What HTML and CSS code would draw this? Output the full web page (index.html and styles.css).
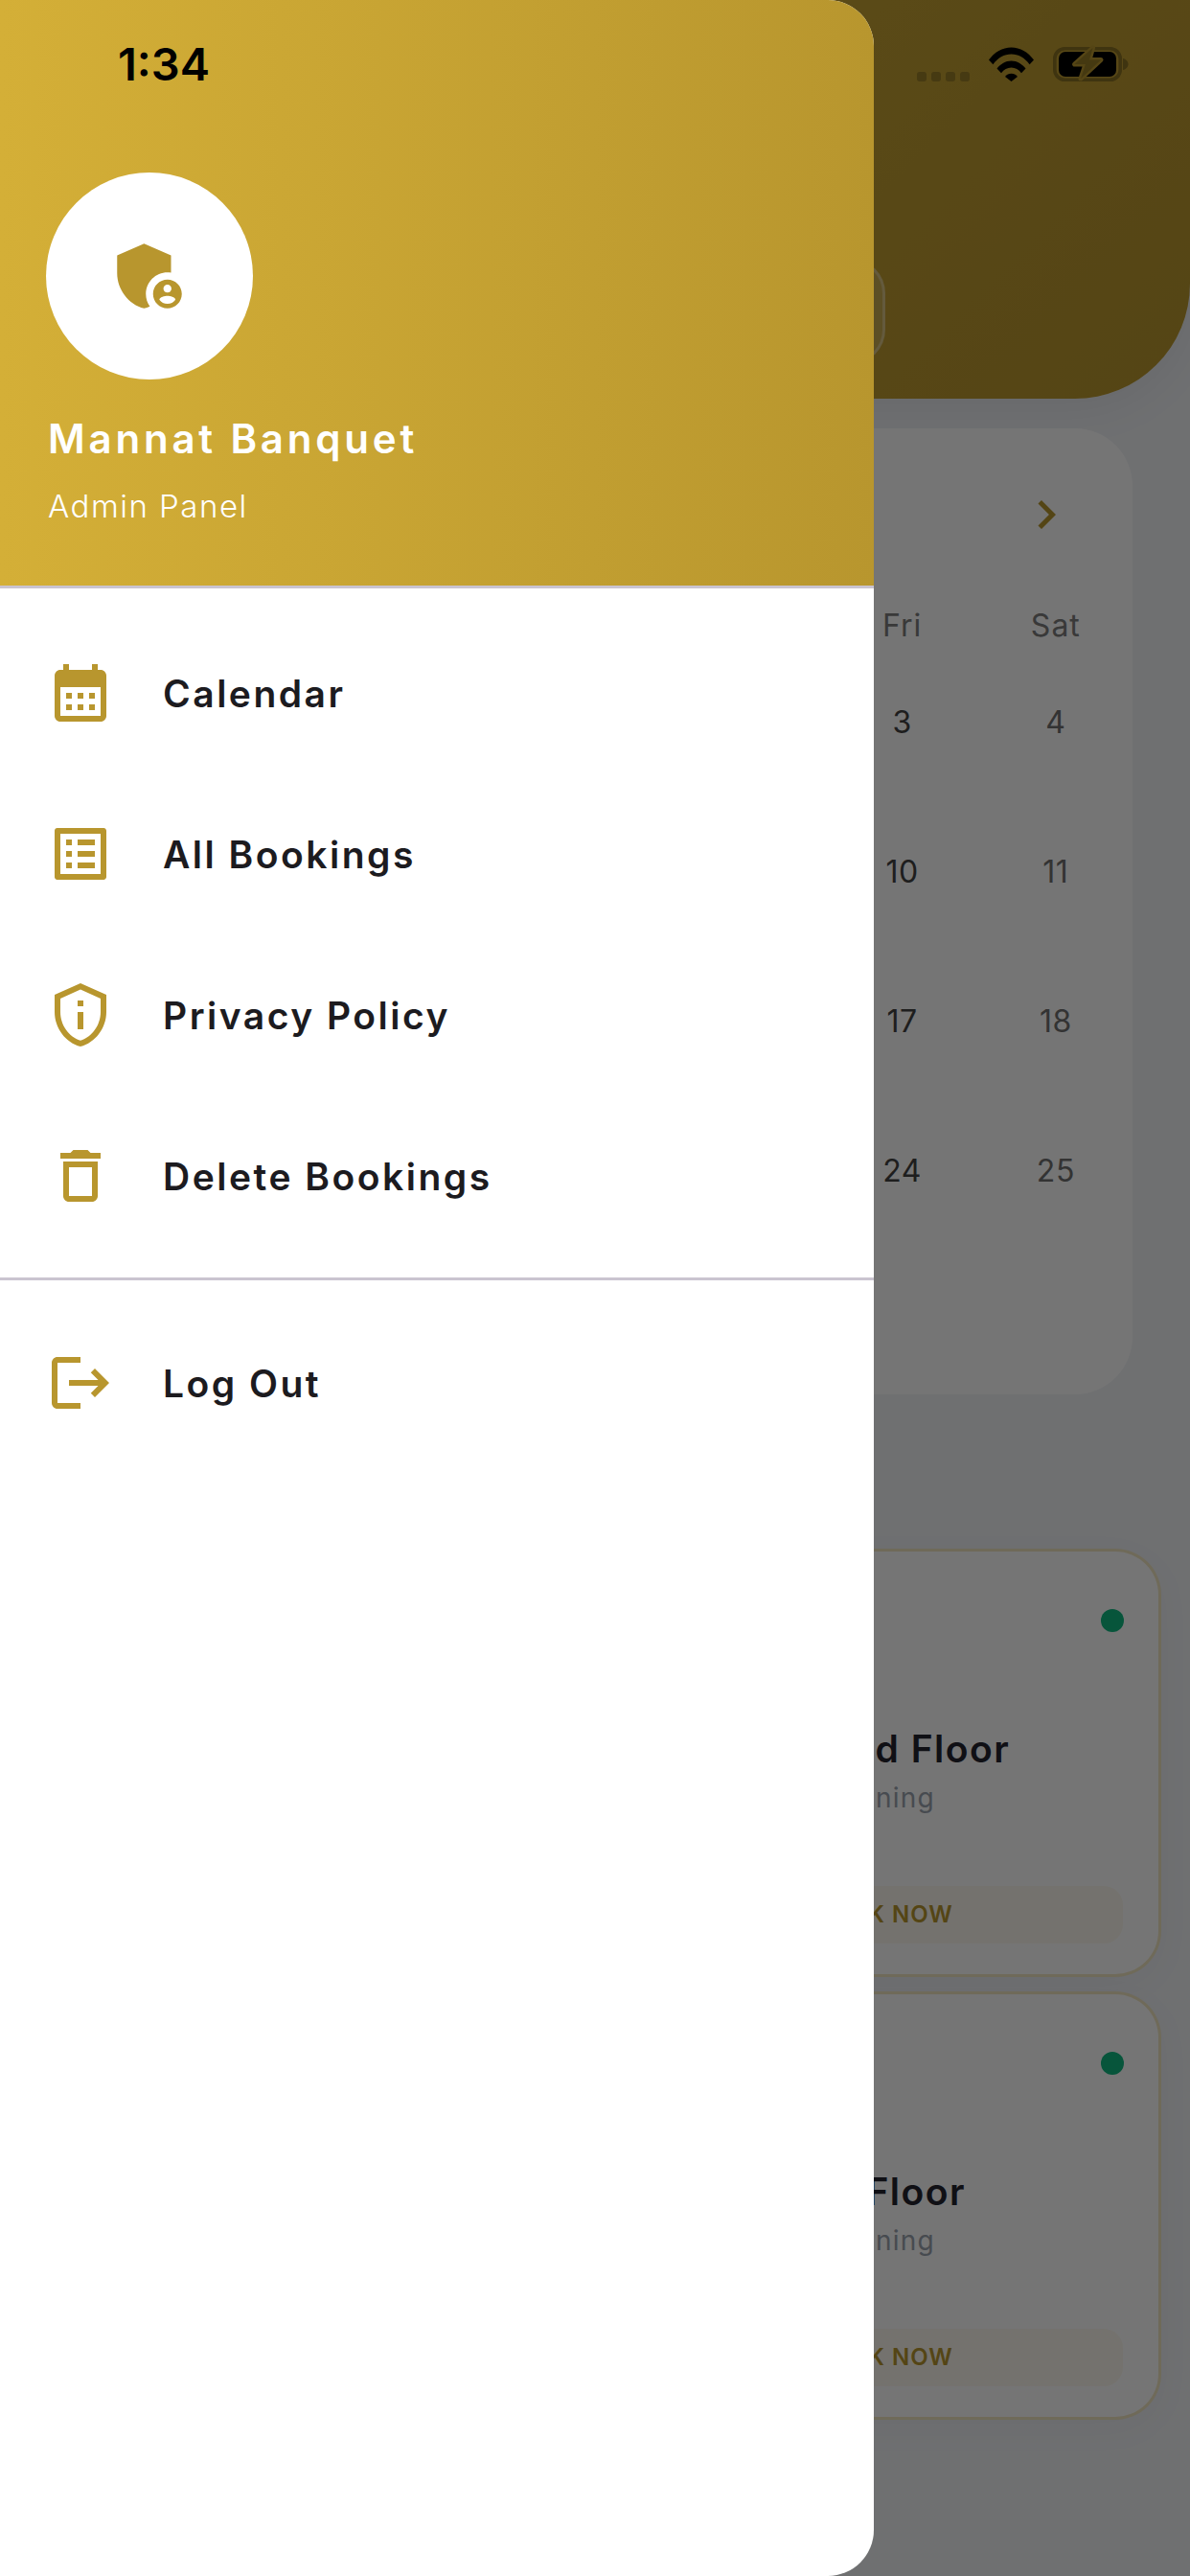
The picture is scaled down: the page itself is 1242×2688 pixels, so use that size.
FILE: index.html
```html
<!DOCTYPE html>
<html lang="en">
<head>
<meta charset="utf-8">
<title>Mannat Banquet</title>
<link rel="stylesheet" href="styles.css">
</head>
<body>
<div class="screen">
  <main class="app">
    <header class="app-header">
      <div class="header-action"></div>
    </header>
    <section class="calendar">
      <div class="calendar-nav">
        <svg class="chevron" viewBox="0 0 24 24"><path d="M10 6 8.59 7.41 13.17 12l-4.58 4.58L10 18l6-6z"/></svg>
      </div>
      <div class="calendar-grid">
        <span class="weekday fri">Fri</span><span class="weekday">Sat</span>
        <span class="date fri">3</span><span class="date sat">4</span>
        <span class="date fri">10</span><span class="date sat">11</span>
        <span class="date fri">17</span><span class="date sat">18</span>
        <span class="date fri">24</span><span class="date sat">25</span>
      </div>
    </section>
    <section class="halls">
      <article class="hall">
        <span class="hall-dot"></span>
        <h3 class="hall-title">Ground Floor</h3>
        <p class="hall-slot">Evening</p>
        <div class="hall-button">BOOK NOW</div>
      </article>
      <article class="hall">
        <span class="hall-dot"></span>
        <h3 class="hall-title">1st Floor</h3>
        <p class="hall-slot">Evening</p>
        <div class="hall-button">BOOK NOW</div>
      </article>
    </section>
  </main>

  <div class="scrim"></div>

  <aside class="drawer">
    <div class="drawer-header">
      <div class="avatar">
        <svg class="avatar-icon" viewBox="0 0 24 24">
          <path d="M17 11c.34 0 .67.04 1 .09V6.27L10.5 3 3 6.27v4.91c0 4.54 3.2 8.79 7.5 9.82.55-.13 1.08-.32 1.6-.55-.69-.98-1.1-2.17-1.1-3.45 0-3.31 2.69-6 6-6z"/>
          <path d="M17 13c-2.21 0-4 1.79-4 4s1.79 4 4 4 4-1.79 4-4-1.79-4-4-4zm0 1.38c.62 0 1.12.51 1.12 1.12s-.51 1.12-1.12 1.12-1.12-.51-1.12-1.12.5-1.12 1.12-1.12zm0 5.37c-.93 0-1.74-.46-2.24-1.17.05-.72 1.51-1.08 2.24-1.08s2.19.36 2.24 1.08c-.5.71-1.31 1.17-2.24 1.17z"/>
        </svg>
      </div>
      <div class="drawer-name">Mannat Banquet</div>
      <div class="drawer-role">Admin Panel</div>
    </div>
    <nav class="menu">
      <a class="menu-item">
        <svg class="menu-icon" viewBox="0 0 24 24"><path d="M19 4h-1V2h-2v2H8V2H6v2H5c-1.1 0-1.99.9-1.99 2L3 20c0 1.1.9 2 2 2h14c1.1 0 2-.9 2-2V6c0-1.1-.9-2-2-2zm0 16H5V10h14v10zM9 14H7v-2h2v2zm4 0h-2v-2h2v2zm4 0h-2v-2h2v2zm-8 4H7v-2h2v2zm4 0h-2v-2h2v2zm4 0h-2v-2h2v2z"/></svg>
        <span>Calendar</span>
      </a>
      <a class="menu-item">
        <svg class="menu-icon" viewBox="0 0 24 24"><path d="M19 5v14H5V5h14m1.1-2H3.9c-.5 0-.9.4-.9.9v16.2c0 .4.4.9.9.9h16.2c.4 0 .9-.5.9-.9V3.9c0-.5-.5-.9-.9-.9zM11 7h6v2h-6V7zm0 4h6v2h-6v-2zm0 4h6v2h-6zM7 7h2v2H7zm0 4h2v2H7zm0 4h2v2H7z"/></svg>
        <span>All Bookings</span>
      </a>
      <a class="menu-item">
        <svg class="menu-icon" viewBox="0 0 24 24"><path d="M12 3.19l7 3.11V11c0 4.52-2.98 8.69-7 9.93-4.02-1.24-7-5.41-7-9.93V6.3l7-3.11M12 1L3 5v6c0 5.55 3.84 10.74 9 12 5.16-1.26 9-6.45 9-12V5l-9-4zm-1 6h2v2h-2zm0 4h2v6h-2z"/></svg>
        <span>Privacy Policy</span>
      </a>
      <a class="menu-item">
        <svg class="menu-icon" viewBox="0 0 24 24"><path d="M6 19c0 1.1.9 2 2 2h8c1.1 0 2-.9 2-2V7H6v12zM8 9h8v10H8V9zm7.5-5l-1-1h-5l-1 1H5v2h14V4z"/></svg>
        <span>Delete Bookings</span>
      </a>
    </nav>
    <div class="menu-divider"></div>
    <nav class="menu">
      <a class="menu-item">
        <svg class="menu-icon" viewBox="0 0 24 24"><path d="M17 7l-1.41 1.41L18.17 11H8v2h10.17l-2.58 2.58L17 17l5-5zM4 5h8V3H4c-1.1 0-2 .9-2 2v14c0 1.1.9 2 2 2h8v-2H4V5z"/></svg>
        <span>Log Out</span>
      </a>
    </nav>
  </aside>

  <div class="status-bar">
    <span class="status-time">1:34</span>
    <div class="status-icons">
      <div class="signal"><i></i><i></i><i></i><i></i></div>
      <svg class="wifi" viewBox="0 0 47 36">
        <path class="wifi-fill" d="M0 13.5C6 5.5 14.2 0.5 23.5 0.5S41 5.5 47 13.5l-4.4 4.8C37.6 11.6 31 7.6 23.5 7.6S9.4 11.6 4.4 18.300z"/>
        <path class="wifi-fill" d="M8.500 22.500C12.300 17.600 17.500 14.400 23.500 14.400S34.700 17.600 38.500 22.500l-4.500 4.700C31.300 23.900 27.700 21.600 23.500 21.600S15.700 23.900 13 27.200z"/>
        <path class="wifi-fill" d="M17 31C18.700 29 21 27.800 23.500 27.800S28.300 29 30 31L23.500 36z"/>
      </svg>
      <svg class="battery" viewBox="0 0 79 36">
        <rect class="battery-shell" x="1.800" y="1.800" width="68.400" height="32.400" rx="10.500"/>
        <rect class="battery-charge" x="6" y="5" width="60" height="26" rx="7"/>
        <path class="battery-bolt" d="M41.500 1 22.500 18H34L29 33 50 13.500H38z"/>
        <path class="battery-cap" d="M73 12c3 .8 5.500 3 5.500 6s-2.500 5.200-5.500 6z"/>
      </svg>
    </div>
  </div>
</div>
</body>
</html>
```
FILE: styles.css
```css
* {
  box-sizing: border-box;
}

html,
body {
  margin: 0;
  padding: 0;
}

body {
  font-family: Inter, "Liberation Sans", sans-serif;
}

.screen {
  position: relative;
  width: 1242px;
  height: 2688px;
  overflow: hidden;
  background: #f1f3f7;
}

/* Page behind the drawer */
.app {
  display: flex;
  flex-direction: column;
}

.app-header {
  display: flex;
  justify-content: flex-end;
  height: 416px;
  padding: 270px 318px 0 0;
  border-radius: 0 0 120px 120px;
  background: linear-gradient(135deg, #d4af37, #b8962e);
  box-shadow: 0 12px 48px rgba(0, 0, 0, 0.06);
}

.header-action {
  width: 400px;
  height: 110px;
  border: 3px solid rgba(255, 255, 255, 0.3);
  border-radius: 36px;
  background: rgba(255, 255, 255, 0.16);
}

.calendar {
  display: flex;
  flex-direction: column;
  width: 1122px;
  height: 1008px;
  margin: 31px 0 0 60px;
  padding-top: 60px;
  border-radius: 60px;
  background: #ffffff;
}

.calendar-nav {
  display: flex;
  justify-content: flex-end;
  height: 60px;
  padding-right: 60px;
}

.chevron {
  width: 60px;
  height: 60px;
  fill: #b8962e;
}

.calendar-grid {
  display: grid;
  grid-template-columns: repeat(7, 1fr);
  grid-template-rows: 47px;
  grid-auto-rows: 156px;
  align-items: center;
  margin-top: 62px;
  font-size: 32px;
  line-height: 40px;
  text-align: center;
}

.weekday {
  letter-spacing: 1px;
  color: #7c7c7c;
}

.date {
  letter-spacing: 0.5px;
}

.fri {
  grid-column: 6;
}

.date.fri {
  color: #434343;
}

.date.sat {
  color: #707070;
}

.halls {
  display: grid;
  grid-template-columns: 579px;
  gap: 15px;
  justify-content: end;
  margin: 161px 30px 0 0;
}

.hall {
  position: relative;
  display: flex;
  flex-direction: column;
  align-items: center;
  height: 447px;
  padding: 184px 37px 0;
  border: 3px solid rgba(212, 175, 55, 0.3);
  border-radius: 48px;
  background: #ffffff;
  box-shadow: 0 10px 40px rgba(0, 0, 0, 0.03);
}

.hall-dot {
  position: absolute;
  top: 60px;
  right: 36px;
  width: 24px;
  height: 24px;
  border-radius: 50%;
  background: #10b981;
}

.hall-title {
  margin: 0;
  font-size: 39px;
  line-height: 44px;
  font-weight: 600;
  letter-spacing: 1.5px;
  color: #23232f;
}

.hall-slot {
  margin: 9px 0 0;
  padding-right: 7px;
  font-size: 28px;
  line-height: 40px;
  letter-spacing: 1.2px;
  color: #9ca3af;
}

.hall-button {
  width: 100%;
  height: 60px;
  margin-top: 72px;
  border-radius: 20px;
  background: rgba(212, 175, 55, 0.08);
  font-size: 24px;
  line-height: 60px;
  font-weight: 600;
  letter-spacing: 1px;
  text-align: center;
  color: #b8962e;
}

/* Scrim */
.scrim {
  position: absolute;
  inset: 0;
  background: rgba(0, 0, 0, 0.54);
}

/* Drawer */
.drawer {
  position: absolute;
  top: 0;
  left: 0;
  bottom: 0;
  width: 912px;
  border-radius: 0 48px 48px 0;
  overflow: hidden;
  background: #ffffff;
}

.drawer-header {
  height: 614px;
  padding: 180px 48px 0;
  border-bottom: 3px solid #cac4d0;
  background: linear-gradient(90deg, #d4af37, #b8962e);
  color: #ffffff;
}

.avatar {
  display: flex;
  align-items: center;
  justify-content: center;
  width: 216px;
  height: 216px;
  border-radius: 50%;
  background: #ffffff;
}

.avatar-icon {
  width: 90px;
  height: 90px;
  fill: #b8962e;
}

.drawer-name {
  margin: 37px 0 0 2px;
  font-size: 42px;
  line-height: 50px;
  font-weight: 600;
  letter-spacing: 3.8px;
}

.drawer-role {
  margin: 23px 0 0 2px;
  font-size: 33px;
  line-height: 44px;
  font-weight: 300;
  letter-spacing: 1.5px;
}

.menu {
  display: flex;
  flex-direction: column;
  padding-top: 25px;
}

.menu-item {
  display: flex;
  align-items: center;
  gap: 50px;
  height: 168px;
  padding-left: 48px;
  font-size: 39px;
  font-weight: 600;
  letter-spacing: 2.5px;
  color: #1c1b1f;
}

.menu-icon {
  flex: none;
  width: 72px;
  height: 72px;
  fill: #b8962e;
}

.menu-divider {
  height: 3px;
  margin-top: 22px;
  background: #cac4d0;
}

.menu-divider + .menu {
  padding-top: 23px;
}

/* Status bar, drawn above everything */
.status-bar {
  position: absolute;
  top: 0;
  left: 0;
  right: 0;
  height: 120px;
}

.status-time {
  position: absolute;
  top: 38px;
  left: 123px;
  font-size: 47px;
  line-height: 58px;
  font-weight: 600;
  color: #000000;
}

.status-icons {
  position: absolute;
  top: 49px;
  left: 957px;
  display: flex;
  align-items: flex-end;
}

.signal {
  display: flex;
  gap: 5px;
  margin-right: 20px;
}

.signal i {
  width: 10px;
  height: 10px;
  border-radius: 3px;
  background: #463a12;
}

.wifi {
  width: 47px;
  height: 36px;
  margin-right: 20px;
}

.wifi-fill {
  fill: #000000;
}

.battery {
  width: 79px;
  height: 36px;
  overflow: visible;
}

.battery-shell {
  fill: none;
  stroke: #3f3410;
  stroke-width: 3.6;
}

.battery-charge {
  fill: #000000;
}

.battery-bolt {
  fill: #453911;
  stroke: #554515;
  stroke-width: 5;
  stroke-linejoin: round;
  paint-order: stroke;
}

.battery-cap {
  fill: #3f3410;
}
```
